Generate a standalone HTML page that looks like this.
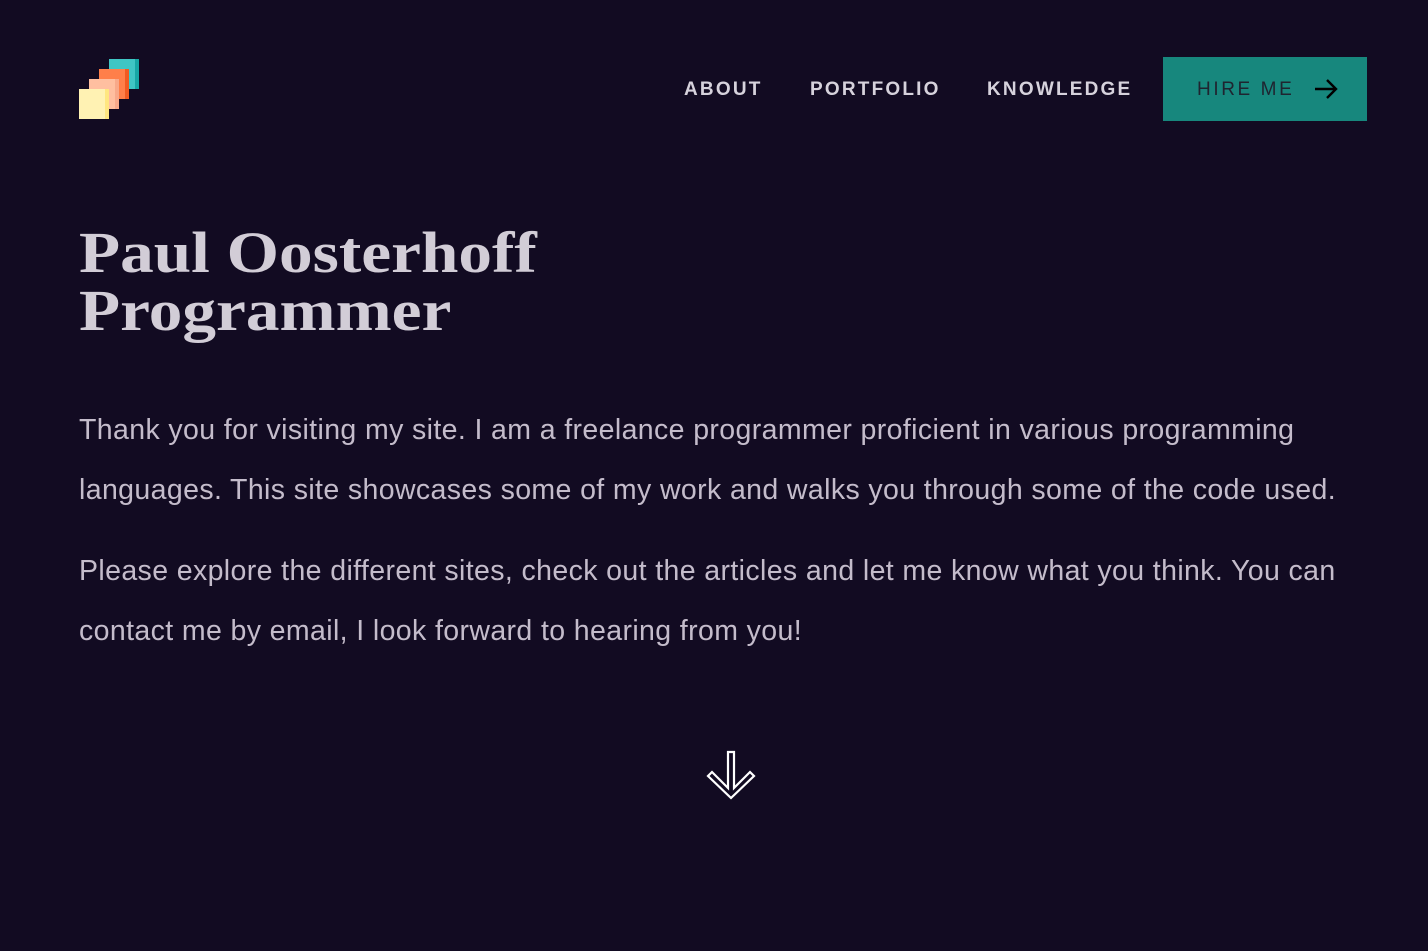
<!DOCTYPE html>
<html><head><meta charset="utf-8"><style>
body{margin:0;background:#120b22;width:1428px;height:951px;overflow:hidden;font-family:"Liberation Sans",sans-serif;}
.sq{position:absolute;width:30px;height:30px;}
nav a{position:absolute;top:79px;font-size:19px;letter-spacing:2.2px;color:#d6d2dc;font-weight:bold;text-decoration:none;}
.btn{position:absolute;left:1163px;top:57px;width:204px;height:64px;background:#17877d;}
h1{position:absolute;left:79px;top:224px;margin:0;font-family:"Liberation Serif",serif;font-weight:bold;font-size:58px;line-height:58px;color:#d2cdd7;transform:scaleX(1.16);transform-origin:left top;}
p{position:absolute;left:79px;margin:0;font-size:28.5px;line-height:60px;color:#c4bccb;white-space:nowrap;letter-spacing:0.38px;}
</style></head><body>
<div class="sq" style="left:109px;top:59px;background:#3fc6c4;border-right:4px solid #17a7a5;width:26px"></div>
<div class="sq" style="left:99px;top:69px;background:#ff7f4a;border-right:4px solid #f15a22;width:26px"></div>
<div class="sq" style="left:89px;top:79px;background:#ffbfa0;border-right:4px solid #f8a98a;width:26px"></div>
<div class="sq" style="left:79px;top:89px;background:#fff2b3;border-right:4px solid #ffe680;width:26px"></div>
<nav>
<a style="left:684px">ABOUT</a>
<a style="left:810px">PORTFOLIO</a>
<a style="left:987px">KNOWLEDGE</a>
</nav>
<div class="btn"><span style="position:absolute;left:34px;top:22px;font-size:19px;letter-spacing:2.6px;color:#1f2430">HIRE ME</span>
<svg style="position:absolute;left:150px;top:20px" width="26" height="24" viewBox="0 0 26 24"><path d="M2 12H23M14 3L23 12L14 21" stroke="#000" stroke-width="2.4" fill="none"/></svg></div>
<h1>Paul Oosterhoff<br>Programmer</h1>
<p style="top:400px">Thank you for visiting my site. I am a freelance programmer proficient in various programming<br>languages. This site showcases some of my work and walks you through some of the code used.</p>
<p style="top:541px">Please explore the different sites, check out the articles and let me know what you think. You can<br>contact me by email, I look forward to hearing from you!</p>
<svg style="position:absolute;left:705px;top:750px" width="52" height="50" viewBox="0 0 52 50"><path d="M23 2H29V38L45 22L49 26L26 48L3 26L7 22L23 38Z" stroke="#fff" stroke-width="2.2" fill="none"/></svg>
</body></html>
